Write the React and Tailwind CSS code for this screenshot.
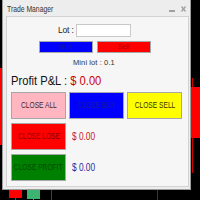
import React from "react";

const F = "font-['Liberation_Sans',Arial,sans-serif]";

function Btn({ bg, color, label, w, h, scale = "scale-x-[0.78]", size = "text-[8.5px]" }) {
  return (
    <div
      className={`${w} ${h} ${bg} border border-[#a7a7a7] flex items-center justify-center`}
    >
      <span className={`inline-block ${scale} ${size} leading-none whitespace-nowrap ${color}`}>
        {label}
      </span>
    </div>
  );
}

export default function App() {
  return (
    <div className={`relative w-[200px] h-[200px] bg-black overflow-hidden ${F}`}>
      {/* chart background */}
      <div className="absolute left-0 top-[68px] w-[2px] h-[77px] bg-[#ff0000]" />
      <div className="absolute left-[192px] top-[78px] w-[1px] h-[95px] bg-[#d00000]" />
      <div className="absolute left-[191px] top-[87px] w-[9px] h-[51px] bg-[#ff0000]" />
      <div className="absolute left-[15px] top-[196px] w-[1px] h-[4px] bg-[#ff0000]" />
      <div className="absolute left-[9px] top-[189px] w-[13px] h-[9px] bg-[#ff0000]" />
      <div className="absolute left-[33px] top-[196px] w-[1px] h-[4px] bg-[#3cb371]" />
      <div className="absolute left-[27px] top-[189px] w-[13px] h-[10px] bg-[#3cb371]" />
      <div className="absolute left-[51px] top-[188px] w-[1px] h-[12px] bg-[#24553a]" />
      <div className="absolute left-[157px] top-[188px] w-[1px] h-[12px] bg-[#b00000]" />

      {/* window */}
      <div className="absolute left-[2px] top-[-1px] w-[189px] h-[191px] bg-[#ededed] border border-[#9c9c9c] flex flex-col">
        <div className="h-[16px] flex items-center pl-[4px] pt-[2px] shrink-0">
          <span className="inline-block origin-left scale-x-[0.8] text-[8.5px] leading-none text-[#333] whitespace-nowrap">
            Trade Manager
          </span>
          <div className="ml-auto flex items-center gap-[6px] mr-[4px]">
            <div className="w-[6px] h-[2px] bg-[#a0a0a0] mt-[4px]" />
            <svg width="5" height="6" viewBox="0 0 5 6">
              <path d="M0.5 0.5 L4.5 5.5 M4.5 0.5 L0.5 5.5" stroke="#a0a0a0" strokeWidth="1.3" />
            </svg>
          </div>
        </div>
        <div className="flex-1 ml-[3px] mr-[1px] mb-[2px] bg-[#f6f6f6] border border-[#d2d2d2] flex flex-col">
          <div className="mt-[7px] ml-[51px] flex items-center h-[13px]">
            <span className="text-[8.5px] leading-none text-[#222] tracking-[-0.2px]">Lot :</span>
            <div className="ml-[2px] w-[55px] h-[13px] bg-white border border-[#c9c9c9]" />
          </div>
          <div className="mt-[4px] ml-[32px] flex gap-[4px]">
            <Btn bg="bg-[#0000ff]" color="text-[#1a1aa0]" label="BUY" w="w-[54px]" h="h-[12px]" size="text-[8px]" />
            <Btn bg="bg-[#ff0000]" color="text-[#9a0000]" label="Sell" w="w-[54px]" h="h-[12px]" size="text-[8px]" scale="scale-x-[0.85]" />
          </div>
          <div className="mt-[5px] ml-[66px] h-[9px] flex items-center">
            <span className="text-[7.5px] leading-none text-[#333] whitespace-nowrap tracking-[0.1px]">
              Mini lot : 0.1
            </span>
          </div>
          <div className="mt-[6px] ml-[4px] h-[14px] flex items-center">
            <span className="inline-block origin-left scale-x-[0.86] text-[13px] leading-none text-[#111] whitespace-nowrap">
              Profit P&amp;L : <span className="text-[#cc0000]">$ 0.00</span>
            </span>
          </div>
          <div className="mt-[5px] ml-[4px] flex gap-[3px]">
            <Btn bg="bg-[#ffb6c1]" color="text-[#3a2a30]" label="CLOSE ALL" w="w-[55px]" h="h-[27px]" />
            <Btn bg="bg-[#0000ff]" color="text-[#1a1a9a]" label="CLOSE BUY" w="w-[55px]" h="h-[27px]" />
            <Btn bg="bg-[#ffff00]" color="text-[#333300]" label="CLOSE SELL" w="w-[55px]" h="h-[27px]" />
          </div>
          <div className="mt-[4px] ml-[4px] flex items-center gap-[6px]">
            <Btn bg="bg-[#ff0000]" color="text-[#8f0000]" label="CLOSE LOSE" w="w-[55px]" h="h-[27px]" />
            <span className="inline-block origin-left scale-x-[0.83] text-[10px] leading-none text-[#c62020] whitespace-nowrap">
              $ 0.00
            </span>
          </div>
          <div className="mt-[4px] ml-[4px] flex items-center gap-[6px]">
            <Btn bg="bg-[#008000]" color="text-[#004a00]" label="CLOSE PROFIT" w="w-[55px]" h="h-[27px]" />
            <span className="inline-block origin-left scale-x-[0.83] text-[10px] leading-none text-[#2a2a9c] whitespace-nowrap">
              $ 0.00
            </span>
          </div>
        </div>
      </div>
    </div>
  );
}
